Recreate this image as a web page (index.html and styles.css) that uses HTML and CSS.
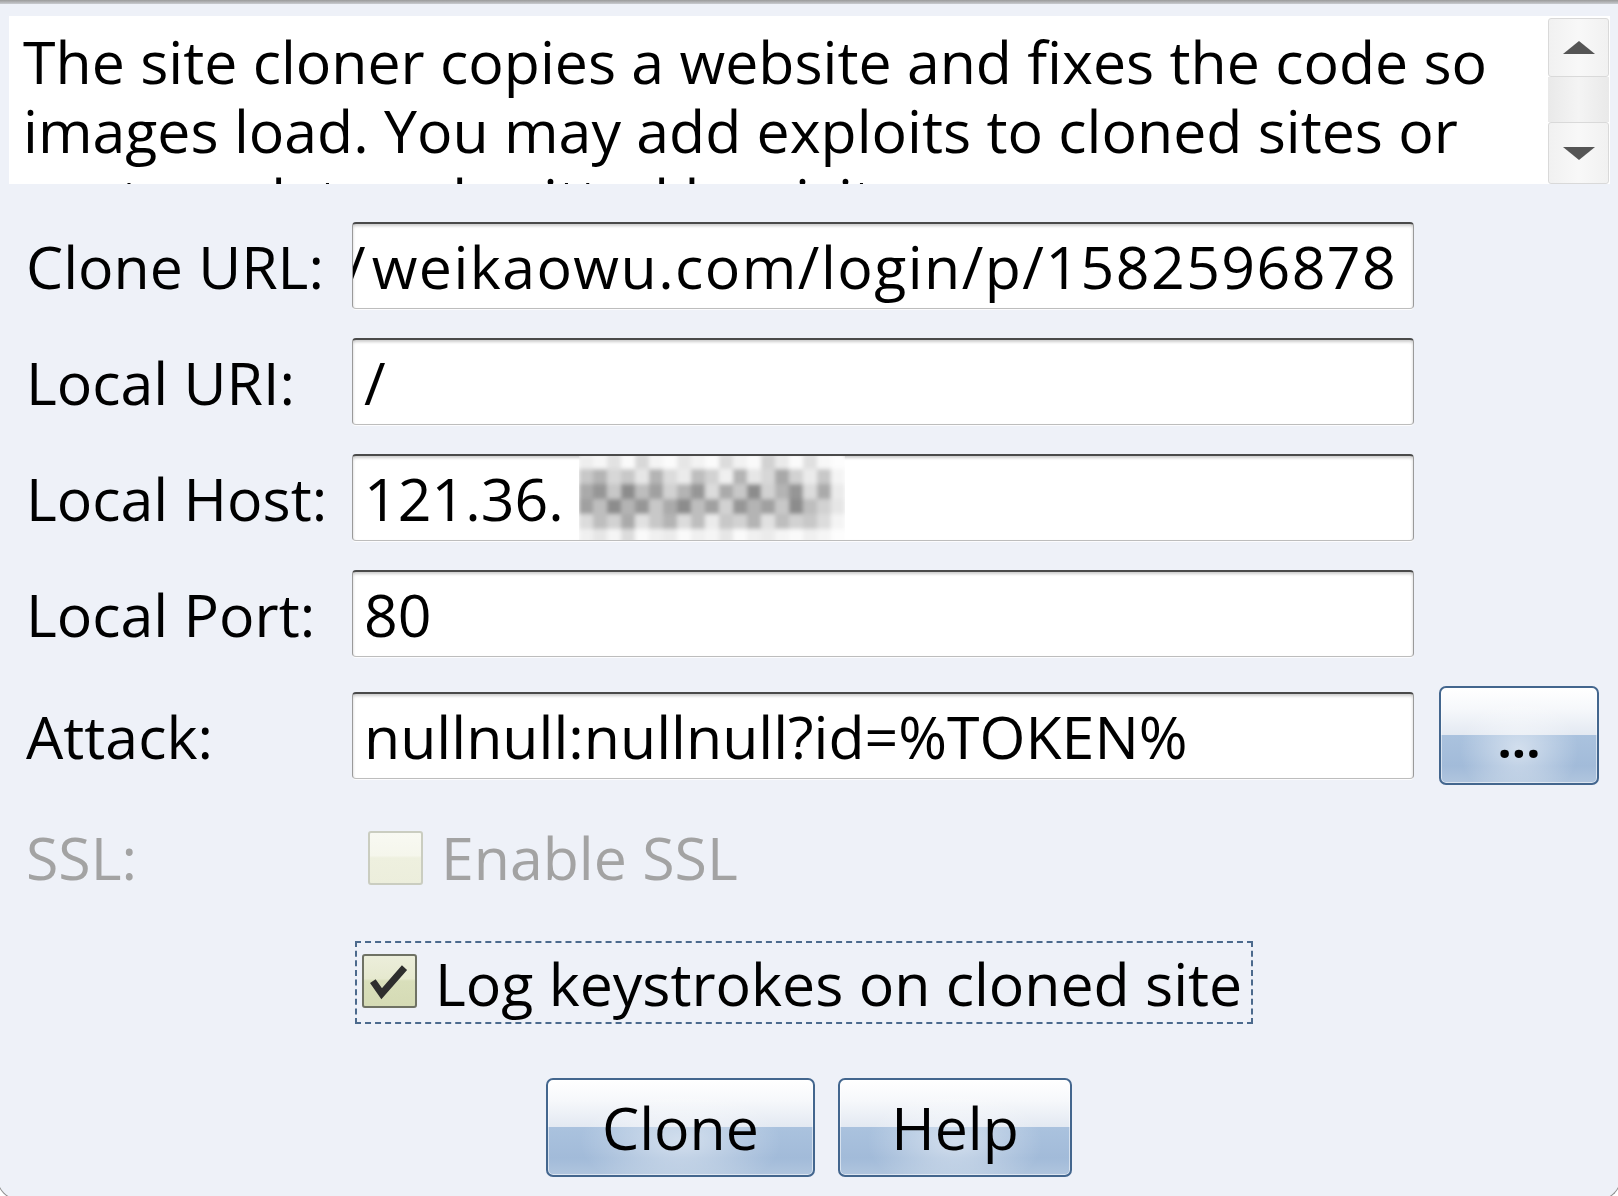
FILE: index.html
```html
<!DOCTYPE html>
<html>
<head>
<meta charset="utf-8">
<title>Clone Site</title>
<link rel="stylesheet" href="styles.css">
</head>
<body>
<div class="window">
  <div class="topline"></div>

  <div class="desc-pane">
    <div class="desc">The site cloner copies a website and fixes the code so<br>images load. You may add exploits to cloned sites or<br>capture data submitted by visitors.</div>
    <div class="scrollbar">
      <div class="sb-btn sb-up">
        <svg width="32" height="13" viewBox="0 0 32 13"><polygon points="16,0 32,13 0,13" fill="#555"/></svg>
      </div>
      <div class="sb-track"></div>
      <div class="sb-btn sb-down">
        <svg width="32" height="13" viewBox="0 0 32 13"><polygon points="0,0 32,0 16,13" fill="#555"/></svg>
      </div>
    </div>
  </div>

  <div class="form">
    <div class="lbl">Clone URL:</div>
    <div class="field"><span class="url"><span class="cut">/</span>weikaowu.com/login/p/1582596878</span></div>
    <div></div>

    <div class="lbl">Local URI:</div>
    <div class="field"><span>/</span></div>
    <div></div>

    <div class="lbl">Local Host:</div>
    <div class="field"><span>121.36.</span>
      <svg class="mosaic" width="266" height="90" viewBox="0 0 266 90">
        <defs><filter id="soft" x="-5%" y="-5%" width="110%" height="110%"><feGaussianBlur stdDeviation="2.2"/></filter></defs>
        <g filter="url(#soft)">
          <rect x="0" y="0" width="266" height="90" fill="#f2f2f2"/>
          <rect x="0" y="0" width="14" height="15" fill="#eeeeee"/><rect x="14" y="0" width="14" height="15" fill="#f6f6f6"/><rect x="28" y="0" width="14" height="15" fill="#e2e2e2"/><rect x="42" y="0" width="14" height="15" fill="#fafafa"/><rect x="56" y="0" width="14" height="15" fill="#d8d8d8"/><rect x="70" y="0" width="14" height="15" fill="#f4f4f4"/><rect x="84" y="0" width="14" height="15" fill="#fbfbfb"/><rect x="98" y="0" width="14" height="15" fill="#e6e6e6"/><rect x="112" y="0" width="14" height="15" fill="#f3f3f3"/><rect x="126" y="0" width="14" height="15" fill="#fbfbfb"/><rect x="140" y="0" width="14" height="15" fill="#dcdcdc"/><rect x="154" y="0" width="14" height="15" fill="#f2f2f2"/><rect x="168" y="0" width="14" height="15" fill="#fafafa"/><rect x="182" y="0" width="14" height="15" fill="#d2d2d2"/><rect x="196" y="0" width="14" height="15" fill="#eaeaea"/><rect x="210" y="0" width="14" height="15" fill="#fbfbfb"/><rect x="224" y="0" width="14" height="15" fill="#e0e0e0"/><rect x="238" y="0" width="14" height="15" fill="#f8f8f8"/><rect x="252" y="0" width="14" height="15" fill="#fdfdfd"/>
          <rect x="0" y="15" width="14" height="15" fill="#c8c8c8"/><rect x="14" y="15" width="14" height="15" fill="#b4b4b4"/><rect x="28" y="15" width="14" height="15" fill="#d7d7d7"/><rect x="42" y="15" width="14" height="15" fill="#c8c8c8"/><rect x="56" y="15" width="14" height="15" fill="#e6e6e6"/><rect x="70" y="15" width="14" height="15" fill="#b4b4b4"/><rect x="84" y="15" width="14" height="15" fill="#dcdcdc"/><rect x="98" y="15" width="14" height="15" fill="#ebebeb"/><rect x="112" y="15" width="14" height="15" fill="#bebebe"/><rect x="126" y="15" width="14" height="15" fill="#d2d2d2"/><rect x="140" y="15" width="14" height="15" fill="#f0f0f0"/><rect x="154" y="15" width="14" height="15" fill="#b4b4b4"/><rect x="168" y="15" width="14" height="15" fill="#e6e6e6"/><rect x="182" y="15" width="14" height="15" fill="#d7d7d7"/><rect x="196" y="15" width="14" height="15" fill="#a8a8a8"/><rect x="210" y="15" width="14" height="15" fill="#d2d2d2"/><rect x="224" y="15" width="14" height="15" fill="#ebebeb"/><rect x="238" y="15" width="14" height="15" fill="#c8c8c8"/><rect x="252" y="15" width="14" height="15" fill="#f4f4f4"/>
          <rect x="0" y="30" width="14" height="15" fill="#aaaaaa"/><rect x="14" y="30" width="14" height="15" fill="#969696"/><rect x="28" y="30" width="14" height="15" fill="#c8c8c8"/><rect x="42" y="30" width="14" height="15" fill="#8c8c8c"/><rect x="56" y="30" width="14" height="15" fill="#bebebe"/><rect x="70" y="30" width="14" height="15" fill="#a0a0a0"/><rect x="84" y="30" width="14" height="15" fill="#d2d2d2"/><rect x="98" y="30" width="14" height="15" fill="#b4b4b4"/><rect x="112" y="30" width="14" height="15" fill="#969696"/><rect x="126" y="30" width="14" height="15" fill="#dcdcdc"/><rect x="140" y="30" width="14" height="15" fill="#aaaaaa"/><rect x="154" y="30" width="14" height="15" fill="#c8c8c8"/><rect x="168" y="30" width="14" height="15" fill="#8c8c8c"/><rect x="182" y="30" width="14" height="15" fill="#d2d2d2"/><rect x="196" y="30" width="14" height="15" fill="#b4b4b4"/><rect x="210" y="30" width="14" height="15" fill="#969696"/><rect x="224" y="30" width="14" height="15" fill="#dcdcdc"/><rect x="238" y="30" width="14" height="15" fill="#aaaaaa"/><rect x="252" y="30" width="14" height="15" fill="#ebebeb"/>
          <rect x="0" y="45" width="14" height="15" fill="#a0a0a0"/><rect x="14" y="45" width="14" height="15" fill="#bebebe"/><rect x="28" y="45" width="14" height="15" fill="#8c8c8c"/><rect x="42" y="45" width="14" height="15" fill="#b4b4b4"/><rect x="56" y="45" width="14" height="15" fill="#969696"/><rect x="70" y="45" width="14" height="15" fill="#c8c8c8"/><rect x="84" y="45" width="14" height="15" fill="#aaaaaa"/><rect x="98" y="45" width="14" height="15" fill="#8c8c8c"/><rect x="112" y="45" width="14" height="15" fill="#bebebe"/><rect x="126" y="45" width="14" height="15" fill="#a0a0a0"/><rect x="140" y="45" width="14" height="15" fill="#d2d2d2"/><rect x="154" y="45" width="14" height="15" fill="#969696"/><rect x="168" y="45" width="14" height="15" fill="#b4b4b4"/><rect x="182" y="45" width="14" height="15" fill="#a0a0a0"/><rect x="196" y="45" width="14" height="15" fill="#c8c8c8"/><rect x="210" y="45" width="14" height="15" fill="#8c8c8c"/><rect x="224" y="45" width="14" height="15" fill="#bebebe"/><rect x="238" y="45" width="14" height="15" fill="#d2d2d2"/><rect x="252" y="45" width="14" height="15" fill="#e6e6e6"/>
          <rect x="0" y="60" width="14" height="15" fill="#dcdcdc"/><rect x="14" y="60" width="14" height="15" fill="#bebebe"/><rect x="28" y="60" width="14" height="15" fill="#d2d2d2"/><rect x="42" y="60" width="14" height="15" fill="#aaaaaa"/><rect x="56" y="60" width="14" height="15" fill="#e1e1e1"/><rect x="70" y="60" width="14" height="15" fill="#c8c8c8"/><rect x="84" y="60" width="14" height="15" fill="#b4b4b4"/><rect x="98" y="60" width="14" height="15" fill="#dcdcdc"/><rect x="112" y="60" width="14" height="15" fill="#bebebe"/><rect x="126" y="60" width="14" height="15" fill="#ebebeb"/><rect x="140" y="60" width="14" height="15" fill="#c8c8c8"/><rect x="154" y="60" width="14" height="15" fill="#d2d2d2"/><rect x="168" y="60" width="14" height="15" fill="#b4b4b4"/><rect x="182" y="60" width="14" height="15" fill="#e1e1e1"/><rect x="196" y="60" width="14" height="15" fill="#bebebe"/><rect x="210" y="60" width="14" height="15" fill="#d2d2d2"/><rect x="224" y="60" width="14" height="15" fill="#c8c8c8"/><rect x="238" y="60" width="14" height="15" fill="#dcdcdc"/><rect x="252" y="60" width="14" height="15" fill="#f4f4f4"/>
          <rect x="0" y="75" width="14" height="15" fill="#f0f0f0"/><rect x="14" y="75" width="14" height="15" fill="#e6e6e6"/><rect x="28" y="75" width="14" height="15" fill="#f5f5f5"/><rect x="42" y="75" width="14" height="15" fill="#dcdcdc"/><rect x="56" y="75" width="14" height="15" fill="#fafafa"/><rect x="70" y="75" width="14" height="15" fill="#f0f0f0"/><rect x="84" y="75" width="14" height="15" fill="#ebebeb"/><rect x="98" y="75" width="14" height="15" fill="#fafafa"/><rect x="112" y="75" width="14" height="15" fill="#f0f0f0"/><rect x="126" y="75" width="14" height="15" fill="#f5f5f5"/><rect x="140" y="75" width="14" height="15" fill="#e6e6e6"/><rect x="154" y="75" width="14" height="15" fill="#fafafa"/><rect x="168" y="75" width="14" height="15" fill="#f0f0f0"/><rect x="182" y="75" width="14" height="15" fill="#ebebeb"/><rect x="196" y="75" width="14" height="15" fill="#f5f5f5"/><rect x="210" y="75" width="14" height="15" fill="#fafafa"/><rect x="224" y="75" width="14" height="15" fill="#f0f0f0"/><rect x="238" y="75" width="14" height="15" fill="#f5f5f5"/><rect x="252" y="75" width="14" height="15" fill="#fdfdfd"/>
        </g>
      </svg>
    </div>
    <div></div>

    <div class="lbl">Local Port:</div>
    <div class="field"><span>80</span></div>
    <div></div>

    <div class="lbl">Attack:</div>
    <div class="field"><span>nullnull:nullnull?id=%TOKEN%</span></div>
    <button class="btn btn-more">...</button>
  </div>

  <div class="ssl-row">
    <div class="lbl disabled">SSL:</div>
    <div class="check-line disabled">
      <span class="checkbox cb-disabled"></span>
      <span>Enable SSL</span>
    </div>
  </div>

  <div class="log-row">
    <div class="focus-box">
      <span class="checkbox cb-checked">
        <svg width="52" height="50" viewBox="0 0 52 50"><polyline points="11,28 18,38 39,14" fill="none" stroke="#2e2e2e" stroke-width="7" stroke-linejoin="miter" stroke-linecap="square"/></svg>
      </span>
      <span>Log keystrokes on cloned site</span>
    </div>
  </div>

  <div class="actions">
    <button class="btn btn-clone">Clone</button>
    <button class="btn btn-help">Help</button>
  </div>
</div>
</body>
</html>
```

FILE: styles.css
```css
* { box-sizing: border-box; }

html, body {
  margin: 0;
  padding: 0;
}

body {
  width: 1618px;
  height: 1196px;
  overflow: hidden;
  background: #ffffff;
  font-family: "Open Sans", "Noto Sans", sans-serif;
  color: #000;
}

.window {
  width: 1624px;
  height: 1200px;
  margin-left: -3px;
  background: #eef1f8;
  border: 1px solid #8f8f8f;
  border-top: none;
  border-radius: 0 0 22px 22px;
  overflow: hidden;
}

.topline {
  height: 4px;
  background: linear-gradient(to bottom, #9a9a9a, #c9cbd0);
}

/* description pane */
.desc-pane {
  margin: 12px 10px 0 11px;
  height: 168px;
  display: flex;
  background: #ffffff;
}

.desc {
  flex: 1;
  overflow: hidden;
  padding: 11px 0 0 14px;
  font-size: 59px;
  line-height: 69px;
  white-space: nowrap;
}

.scrollbar {
  width: 63px;
  display: flex;
  flex-direction: column;
  padding: 2px 1px 0;
  background: #ffffff;
}

.sb-btn {
  display: flex;
  align-items: center;
  justify-content: center;
  background: linear-gradient(to right, #f1f1f1, #f8f8f8 50%, #f1f1f1);
  border: 1px solid #d9d9d9;
  border-radius: 3px;
}

.sb-up { height: 59px; }
.sb-down { height: 62px; }

.sb-track {
  flex: 1;
  background: linear-gradient(to right, #e9e9e9, #f4f4f4 50%, #e9e9e9);
}

/* form grid */
.form {
  margin: 38px 0 0 28px;
  display: grid;
  grid-template-columns: 301px 1062px 160px;
  column-gap: 25px;
  row-gap: 29px;
  align-items: center;
}

.lbl {
  font-size: 59px;
  white-space: nowrap;
}

.field {
  position: relative;
  height: 87px;
  display: flex;
  align-items: center;
  padding: 0 14px 0 11px;
  background: #ffffff;
  border: 1px solid #9a9a9a;
  border-top: 2px solid #4a4a4a;
  border-bottom-color: #bdbdbd;
  border-radius: 4px;
  box-shadow: inset 0 2px 3px rgba(0, 0, 0, 0.2), 0 1px 0 rgba(255, 255, 255, 0.8);
  font-size: 59px;
  white-space: nowrap;
  overflow: hidden;
}

.url {
  letter-spacing: 1.45px;
}

.cut {
  display: inline-block;
  margin-left: -20px;
  margin-right: 6px;
  letter-spacing: 0;
}

.mosaic {
  position: absolute;
  left: 226px;
  top: -2px;
}

/* buttons */
.btn {
  height: 99px;
  padding: 0;
  border: 2px solid #43668e;
  border-radius: 7px;
  font-family: "Open Sans", "Noto Sans", sans-serif;
  font-size: 59px;
  color: #000;
  background:
    radial-gradient(ellipse 38% 55% at 50% 65%, rgba(255, 255, 255, 0.5), rgba(255, 255, 255, 0) 100%),
    linear-gradient(to bottom, #ffffff 0%, #f6f8fb 22%, #e3e9f2 49%, #aac2de 50%, #a2bbd9 82%, #b0c5de 100%);
  box-shadow: inset 0 0 0 1px rgba(255, 255, 255, 0.55);
  display: flex;
  align-items: center;
  justify-content: center;
  line-height: 1;
}

.btn-more {
  width: 160px;
  font-weight: 700;
  font-size: 50px;
  padding-top: 6px;
}

/* SSL row */
.ssl-row {
  margin: 32px 0 0 28px;
  display: grid;
  grid-template-columns: 301px auto;
  column-gap: 25px;
  align-items: center;
}

.disabled {
  color: #a3a3a3;
}

.check-line {
  display: flex;
  align-items: center;
  gap: 18px;
  padding-left: 16px;
  font-size: 59px;
  white-space: nowrap;
}

.checkbox {
  width: 55px;
  height: 54px;
  flex: none;
  border-radius: 3px;
  display: flex;
  align-items: center;
  justify-content: center;
}

.cb-disabled {
  border: 2px solid #cacdc0;
  background: linear-gradient(to bottom, #f8f9f2 0%, #f5f6ec 45%, #eef0df 50%, #eceedc 100%);
  margin-top: 2px;
}

.cb-checked {
  border: 2px solid #6f7264;
  background: linear-gradient(to bottom, #eceedb 0%, #e6e9cf 45%, #d9dfbb 50%, #d5dbb5 100%);
  margin-bottom: 4px;
}

/* log row */
.log-row {
  margin: 44px 0 0 357px;
  display: flex;
}

.focus-box {
  display: inline-flex;
  align-items: center;
  gap: 18px;
  height: 83px;
  padding: 0 9px 0 5px;
  border: 2px dashed #4c6a8d;
  font-size: 59px;
  white-space: nowrap;
}

/* bottom buttons */
.actions {
  margin-top: 54px;
  display: flex;
  justify-content: center;
  gap: 23px;
}

.btn-clone { width: 269px; }
.btn-help { width: 234px; }
```
